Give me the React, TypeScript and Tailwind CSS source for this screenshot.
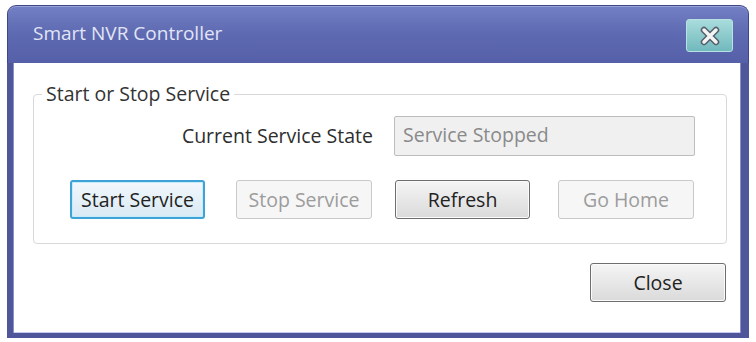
import React from "react";

const font = { fontFamily: '"Open Sans", "Noto Sans", sans-serif' };

export default function App() {
  return (
    <div className="w-[756px] h-[342px] bg-white pt-[5px] pl-[7px]" style={font}>
      <div className="w-[742px] h-[333px] flex flex-col">
        {/* Title bar */}
        <div className="h-[58px] rounded-t-[9px] border-t border-x border-[#3f4788] bg-gradient-to-b from-[#7480c4] via-[#5d69b0] to-[#5560a8] flex items-center justify-between pl-[25px] pr-[15px] shadow-[inset_0_1px_0_#97a2d8]">
          <span className="text-[19px] text-[#e2e5f7] mb-[2px]">Smart NVR Controller</span>
          <div className="w-[47px] h-[33px] mt-[2px] rounded-[3px] border border-[#b9e0e2] bg-gradient-to-b from-[#a9dcdc] to-[#70b9bd] flex items-center justify-center">
            <svg width="22" height="20" viewBox="0 0 22 20">
              <path d="M5 4 L17 16 M17 4 L5 16" stroke="#55606c" strokeWidth="6.5" strokeLinecap="round" fill="none" />
              <path d="M5 4 L17 16 M17 4 L5 16" stroke="#f4f4f4" strokeWidth="3.5" strokeLinecap="round" fill="none" />
            </svg>
          </div>
        </div>
        {/* Body */}
        <div className="flex-1 border-l-[6px] border-r-[8px] border-b-[5px] border-[#4f5699] bg-white flex flex-col shadow-[inset_1px_0_0_#8a90c8,inset_-1px_0_0_#8a90c8,inset_0_-1px_0_#c5c9ee]">
          <fieldset className="mt-[20px] ml-[20px] mr-[14px] border border-[#d9d9d9] rounded-[4px] px-0 pb-[24px]">
            <legend className="ml-[8px] px-[4px] text-[19.5px] leading-[22px] text-[#333333]">Start or Stop Service</legend>
            <div className="flex items-center justify-end pr-[31px] mt-[11px]">
              <span className="text-[19.5px] text-[#2e2e2e] mr-[21px]">Current Service State</span>
              <div className="w-[301px] h-[40px] bg-[#f0f0f0] border border-[#bdbdbd] rounded-[2px] flex items-center pl-[8px]">
                <span className="text-[19.5px] text-[#8a8a8a] mb-[2px]">Service Stopped</span>
              </div>
            </div>
            <div className="flex items-center mt-[24px] pl-[36px] text-[19.5px]">
              <button className="w-[135px] h-[39px] rounded-[3px] border-2 border-[#3fa2d6] bg-gradient-to-b from-[#f2f8fc] to-[#d9e9f4] text-[#222] shadow-[inset_0_0_0_1px_#c5ecfb]">
                Start Service
              </button>
              <button className="ml-[31px] w-[136px] h-[39px] rounded-[3px] border border-[#c9c9c9] bg-[#f6f6f6] text-[#9c9c9c]">
                Stop Service
              </button>
              <button className="ml-[23px] w-[135px] h-[39px] rounded-[3px] border border-[#6e6e6e] bg-gradient-to-b from-[#f5f5f5] to-[#dadada] text-[#222] shadow-[inset_0_0_0_1px_#fbfbfb]">
                Refresh
              </button>
              <button className="ml-[28px] w-[136px] h-[39px] rounded-[3px] border border-[#c9c9c9] bg-[#f6f6f6] text-[#9c9c9c]">
                Go Home
              </button>
            </div>
          </fieldset>
          <div className="flex justify-end mr-[15px] mt-[19px] text-[19.5px]">
            <button className="w-[136px] h-[39px] rounded-[3px] border border-[#6e6e6e] bg-gradient-to-b from-[#f5f5f5] to-[#dadada] text-[#222] shadow-[inset_0_0_0_1px_#fbfbfb]">
              Close
            </button>
          </div>
        </div>
      </div>
    </div>
  );
}
